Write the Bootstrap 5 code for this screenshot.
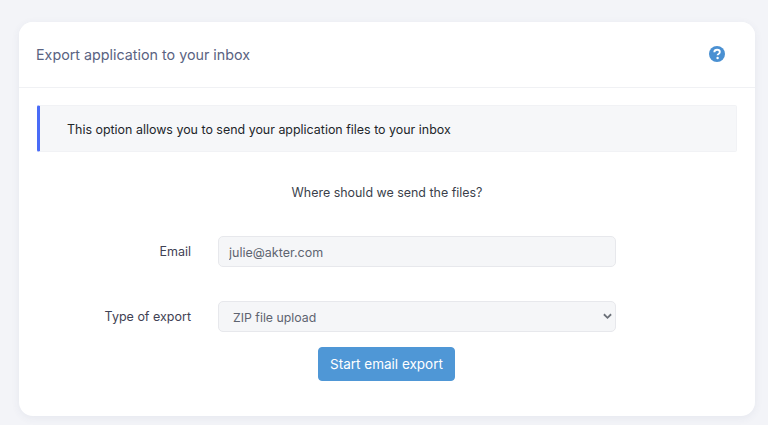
<!DOCTYPE html>
<html lang="en">
<head>
<meta charset="utf-8">
<title>Export</title>
<link href="https://cdn.jsdelivr.net/npm/bootstrap@5.3.0/dist/css/bootstrap.min.css" rel="stylesheet">
<style>
html,body{height:425px;overflow:hidden}
body{background:#f3f4f8;font-family:Inter,"Liberation Sans",sans-serif;font-size:12.5px;color:#3f4254;padding:22px 13px 9px 19px}
.export-card{border:0;border-radius:14px;background:#fff;height:394px;box-shadow:0 2px 8px rgba(60,70,110,.07)}
.export-head{height:66px;padding:1px 30px 0 17px;background:#fff;border-bottom:1.5px solid #f0f1f4;border-radius:14px 14px 0 0!important;font-size:14.3px;color:#5a6382}
.export-head svg{margin-bottom:3px}
.export-body{padding:17px 18px 0}
.note{height:47px;margin:0 0 31px;padding:3px 0 0 27px;background:#f6f7f9;border:1px solid #f1f2f5;border-left:3.5px solid #4a6cf7;border-radius:2px;color:#212529;font-size:12.45px}
.ask{margin:0 0 33px;line-height:20px;color:#3a3f4b;font-size:12.45px}
.field-row{height:31px;margin-bottom:34px}
.field-label{width:172px;margin:0 27px 0 -18px;padding:2px 0 0;text-align:right;color:#3f4254}
.field-ctl{width:398px;height:31px;min-height:31px;padding:2px 10px 0;background-color:#f5f6f8;border:1.5px solid #e7e8ec;border-radius:5px;font-size:12.5px;color:#5e6470}
select.field-ctl{padding:3px 24px 0 14px;font-size:12.3px;background-image:url("data:image/svg+xml,%3csvg xmlns='http://www.w3.org/2000/svg' viewBox='0 0 10 7'%3e%3cpath fill='none' stroke='%236b7078' stroke-width='2' d='M1 1l4 4 4-4'/%3e%3c/svg%3e");background-position:right 3px center;background-size:9px 7px}
.go-row{margin-top:-19px;padding-left:281px}
.go-btn{width:137px;height:34px;padding:0;background:#4f97d6;border:1px solid #4f97d6;border-radius:4px;color:#fff;font-size:13.5px}
</style>
</head>
<body>
<div class="card export-card">
  <div class="card-header export-head d-flex align-items-center justify-content-between">
    <span>Export application to your inbox</span>
    <svg width="16" height="16" viewBox="0 0 16 16" role="img" aria-label="Help"><circle cx="8" cy="8" r="8" fill="#4a90d2"/><path d="M5.3 6.2C5.4 4.7 6.5 3.8 8.1 3.8c1.6 0 2.7.9 2.7 2.2 0 1-.5 1.5-1.3 2-.7.4-.9.7-.9 1.3" fill="none" stroke="#fff" stroke-width="1.9"/><circle cx="8.6" cy="12" r="1.2" fill="#fff"/></svg>
  </div>
  <div class="export-body">
    <div class="note d-flex align-items-center">This option allows you to send your application files to your inbox</div>
    <p class="ask text-center">Where should we send the files?</p>
    <form>
      <div class="field-row d-flex align-items-center">
        <label class="field-label" for="mail">Email</label>
        <input class="form-control field-ctl" id="mail" type="email" value="julie@akter.com">
      </div>
      <div class="field-row d-flex align-items-center">
        <label class="field-label" for="kind">Type of export</label>
        <select class="form-select field-ctl" id="kind"><option>ZIP file upload</option></select>
      </div>
      <div class="go-row"><button type="button" class="btn go-btn">Start email export</button></div>
    </form>
  </div>
</div>
</body>
</html>
